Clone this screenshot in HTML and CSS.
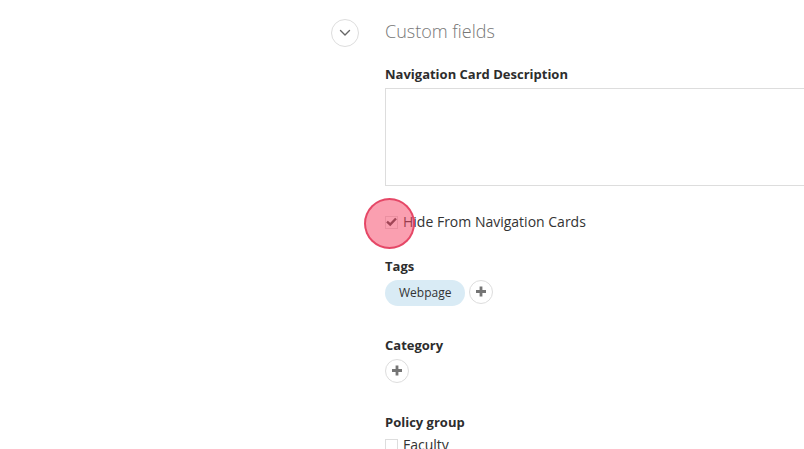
FILE: index.html
```html
<!DOCTYPE html>
<html lang="en">
  <head>
    <meta charset="UTF-8" />
    <meta name="viewport" content="width=device-width, initial-scale=1.0" />
    <title>Custom fields</title>
    <link rel="stylesheet" href="styles.css">
  </head>
  <body>
    <section class="panel">
      <button type="button" class="round toggle" aria-label="Collapse custom fields">
        <svg width="12" height="8" viewBox="0 0 12 8">
          <path d="M1.5 1.5 L6 6 L10.5 1.5" fill="none" stroke="#666" stroke-width="1.4" stroke-linecap="round" stroke-linejoin="round" />
        </svg>
      </button>
      <form class="panel-body">
        <h2>Custom fields</h2>

        <div class="field description">
          <label class="field-label" for="cardDescription">Navigation Card Description</label>
          <textarea id="cardDescription" name="cardDescription"></textarea>
        </div>

        <div class="check">
          <span class="check-box">
            <input type="checkbox" id="hideCards" name="hideCards" checked />
            <span class="click-marker"></span>
          </span>
          <label for="hideCards">Hide From Navigation Cards</label>
        </div>

        <div class="field tags">
          <h3 class="field-label">Tags</h3>
          <div class="tag-row">
            <span class="tag">Webpage</span>
            <button type="button" class="round add" aria-label="Add tag">
              <svg width="12" height="12" viewBox="0 0 12 12">
                <path d="M6 0.5 V10.5 M1 5.5 H11" stroke="#757575" stroke-width="2.8" />
              </svg>
            </button>
          </div>
        </div>

        <div class="field category">
          <h3 class="field-label">Category</h3>
          <div class="tag-row">
            <button type="button" class="round add" aria-label="Add category">
              <svg width="12" height="12" viewBox="0 0 12 12">
                <path d="M6 0.5 V10.5 M1 5.5 H11" stroke="#757575" stroke-width="2.8" />
              </svg>
            </button>
          </div>
        </div>

        <div class="field policy">
          <h3 class="field-label">Policy group</h3>
          <div class="check">
            <span class="check-box">
              <input type="checkbox" id="faculty" name="faculty" />
            </span>
            <label for="faculty">Faculty</label>
          </div>
        </div>
      </form>
    </section>
  </body>
</html>
```

FILE: styles.css
```css
body {
  margin: 0;
  background-color: #fff;
  color: #333;
  font-family: "Open Sans", sans-serif;
  font-size: 14px;
  line-height: 20px;
  overflow-x: hidden;
}

.panel {
  display: flex;
  align-items: flex-start;
  gap: 26px;
  padding-top: 17px;
  padding-left: 331px;
}

.panel-body {
  flex: 1;
  min-width: 0;
}

h2 {
  margin: 0 0 19px;
  color: #777;
  font-size: 18px;
  font-weight: 300;
  line-height: 28px;
}

.field-label {
  display: block;
  margin: 0;
  color: #2d2d2d;
  font-size: 13px;
  font-weight: bold;
  line-height: 20px;
}

textarea {
  display: block;
  box-sizing: border-box;
  width: 100%;
  height: 98px;
  margin: 4px 0 0;
  padding: 8px;
  border: 1px solid #ddd;
  border-right: none;
  font: inherit;
  resize: none;
}

.description {
  margin-bottom: 26px;
}

.check {
  display: flex;
  align-items: center;
  gap: 5px;
}

.check-box {
  position: relative;
  display: flex;
}

input[type="checkbox"] {
  appearance: none;
  box-sizing: border-box;
  width: 13px;
  height: 13px;
  margin: 0;
  border: 1px solid #ddd;
  background-color: #fff;
}

input[type="checkbox"]:checked {
  background: #fff url("data:image/svg+xml,%3Csvg xmlns='http://www.w3.org/2000/svg' viewBox='0 0 11 11'%3E%3Cpath d='M1 4.7L4.2 7.5L10 1.5' fill='none' stroke='%23444' stroke-width='2.4'/%3E%3C/svg%3E") center / 11px 11px no-repeat;
}

.click-marker {
  position: absolute;
  top: -18px;
  left: -21px;
  box-sizing: border-box;
  width: 51px;
  height: 51px;
  border: 2px solid rgba(222, 42, 78, 0.75);
  border-radius: 50%;
  background-color: rgba(246, 70, 103, 0.52);
  pointer-events: none;
}

.tags {
  margin-top: 24px;
}

.category {
  margin-top: 29px;
}

.policy {
  margin-top: 29px;
}

.tag-row {
  display: flex;
  align-items: flex-start;
  gap: 4px;
  margin-top: 4px;
}

.tag {
  padding: 0 14px;
  border-radius: 13px;
  background-color: #d9ebf5;
  font-size: 12px;
  line-height: 26px;
}

.policy .check {
  margin-top: 3px;
}

.round {
  display: flex;
  align-items: center;
  justify-content: center;
  box-sizing: border-box;
  padding: 0;
  border: 1px solid #ddd;
  border-radius: 50%;
  background-color: #fff;
  cursor: pointer;
}

.toggle {
  width: 28px;
  height: 28px;
  margin-top: 2px;
}

.add {
  width: 24px;
  height: 24px;
}
```
